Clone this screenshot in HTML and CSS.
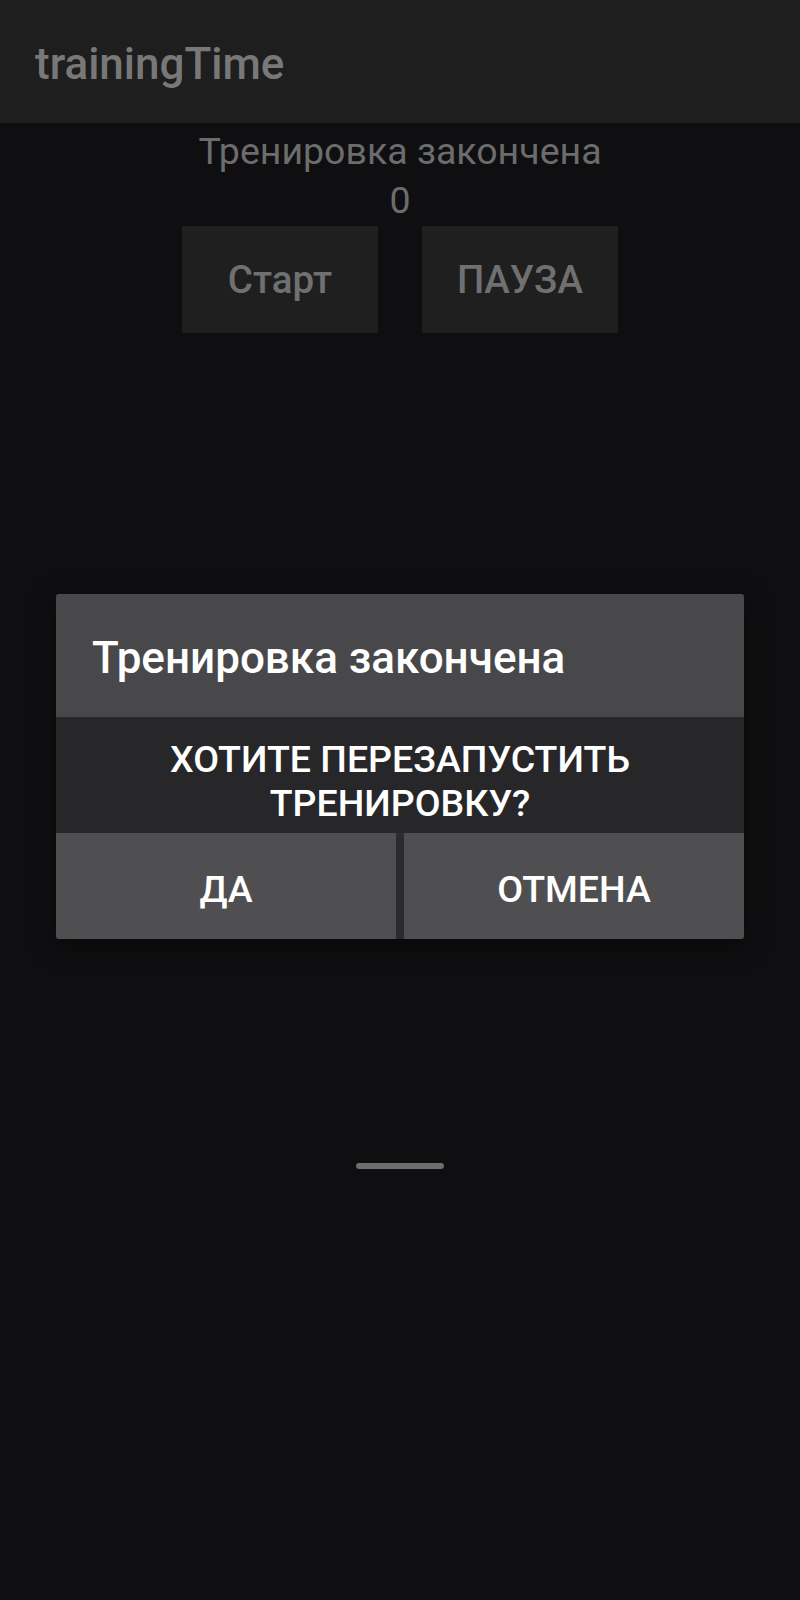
FILE: index.html
```html
<!DOCTYPE html>
<html lang="ru">
<head>
<meta charset="utf-8">
<title>trainingTime</title>
<link rel="stylesheet" href="styles.css">
</head>
<body>
<div class="screen">
  <header class="appbar"><span class="app-title">trainingTime</span></header>
  <main class="content">
    <div class="status">Тренировка закончена</div>
    <div class="counter">0</div>
    <div class="controls">
      <button class="ctl">Старт</button>
      <button class="ctl">ПАУЗА</button>
    </div>
  </main>
  <div class="dialog">
    <div class="dlg-title">Тренировка закончена</div>
    <div class="dlg-msg">ХОТИТЕ ПЕРЕЗАПУСТИТЬ<br>ТРЕНИРОВКУ?</div>
    <div class="dlg-actions">
      <button class="dlg-btn">ДА</button>
      <button class="dlg-btn">ОТМЕНА</button>
    </div>
  </div>
  <div class="nav-handle"></div>
</div>
</body>
</html>
```
FILE: styles.css
```css
html, body {
  margin: 0;
  padding: 0;
  background: #0f0f11;
}
body {
  font-family: Roboto, "Noto Sans", sans-serif;
}
.screen {
  position: relative;
  width: 800px;
  height: 1600px;
  background: #0f0f11;
  overflow: hidden;
}
.appbar {
  height: 123px;
  background: #1e1e1e;
  display: flex;
  align-items: center;
  padding-left: 35px;
  box-sizing: border-box;
}
.app-title {
  color: #787878;
  font-size: 44px;
  font-weight: 500;
  margin-top: 4px;
}
.content {
  display: flex;
  flex-direction: column;
  align-items: center;
}
.status {
  color: #6c6c6c;
  font-size: 37.5px;
  line-height: 44px;
  margin-top: 6px;
}
.counter {
  color: #6c6c6c;
  font-size: 37.5px;
  line-height: 44px;
  margin-top: 5px;
}
.controls {
  display: flex;
  gap: 44px;
  margin-top: 4px;
}
.ctl {
  width: 196px;
  height: 107px;
  border: none;
  border-radius: 1px;
  background: #1f1f1f;
  color: #707070;
  font-family: Roboto, sans-serif;
  font-size: 38.5px;
  font-weight: 500;
  padding: 0;
}
.dialog {
  position: absolute;
  left: 56px;
  top: 594px;
  width: 688px;
  background: #2b2b2e;
  border-radius: 3px;
  overflow: hidden;
  box-shadow: 0 6px 24px rgba(0,0,0,0.5);
}
.dlg-title {
  height: 123px;
  background: #48484a;
  color: #ffffff;
  font-size: 44px;
  font-weight: 500;
  display: flex;
  align-items: center;
  padding-left: 36px;
  padding-top: 4px;
  box-sizing: border-box;
}
.dlg-msg {
  height: 116px;
  background: #27272a;
  color: #ffffff;
  font-size: 37.5px;
  font-weight: 500;
  line-height: 44px;
  text-align: center;
  padding-top: 20px;
  box-sizing: border-box;
}
.dlg-actions {
  display: flex;
  gap: 8px;
  height: 106px;
}
.dlg-btn {
  flex: 1;
  border: none;
  background: #4f4f51;
  color: #ffffff;
  font-family: Roboto, sans-serif;
  font-size: 37.5px;
  font-weight: 500;
  padding: 6px 0 0;
}
.nav-handle {
  position: absolute;
  left: 356px;
  top: 1163px;
  width: 88px;
  height: 6px;
  border-radius: 3px;
  background: #6e6e6e;
}
```
